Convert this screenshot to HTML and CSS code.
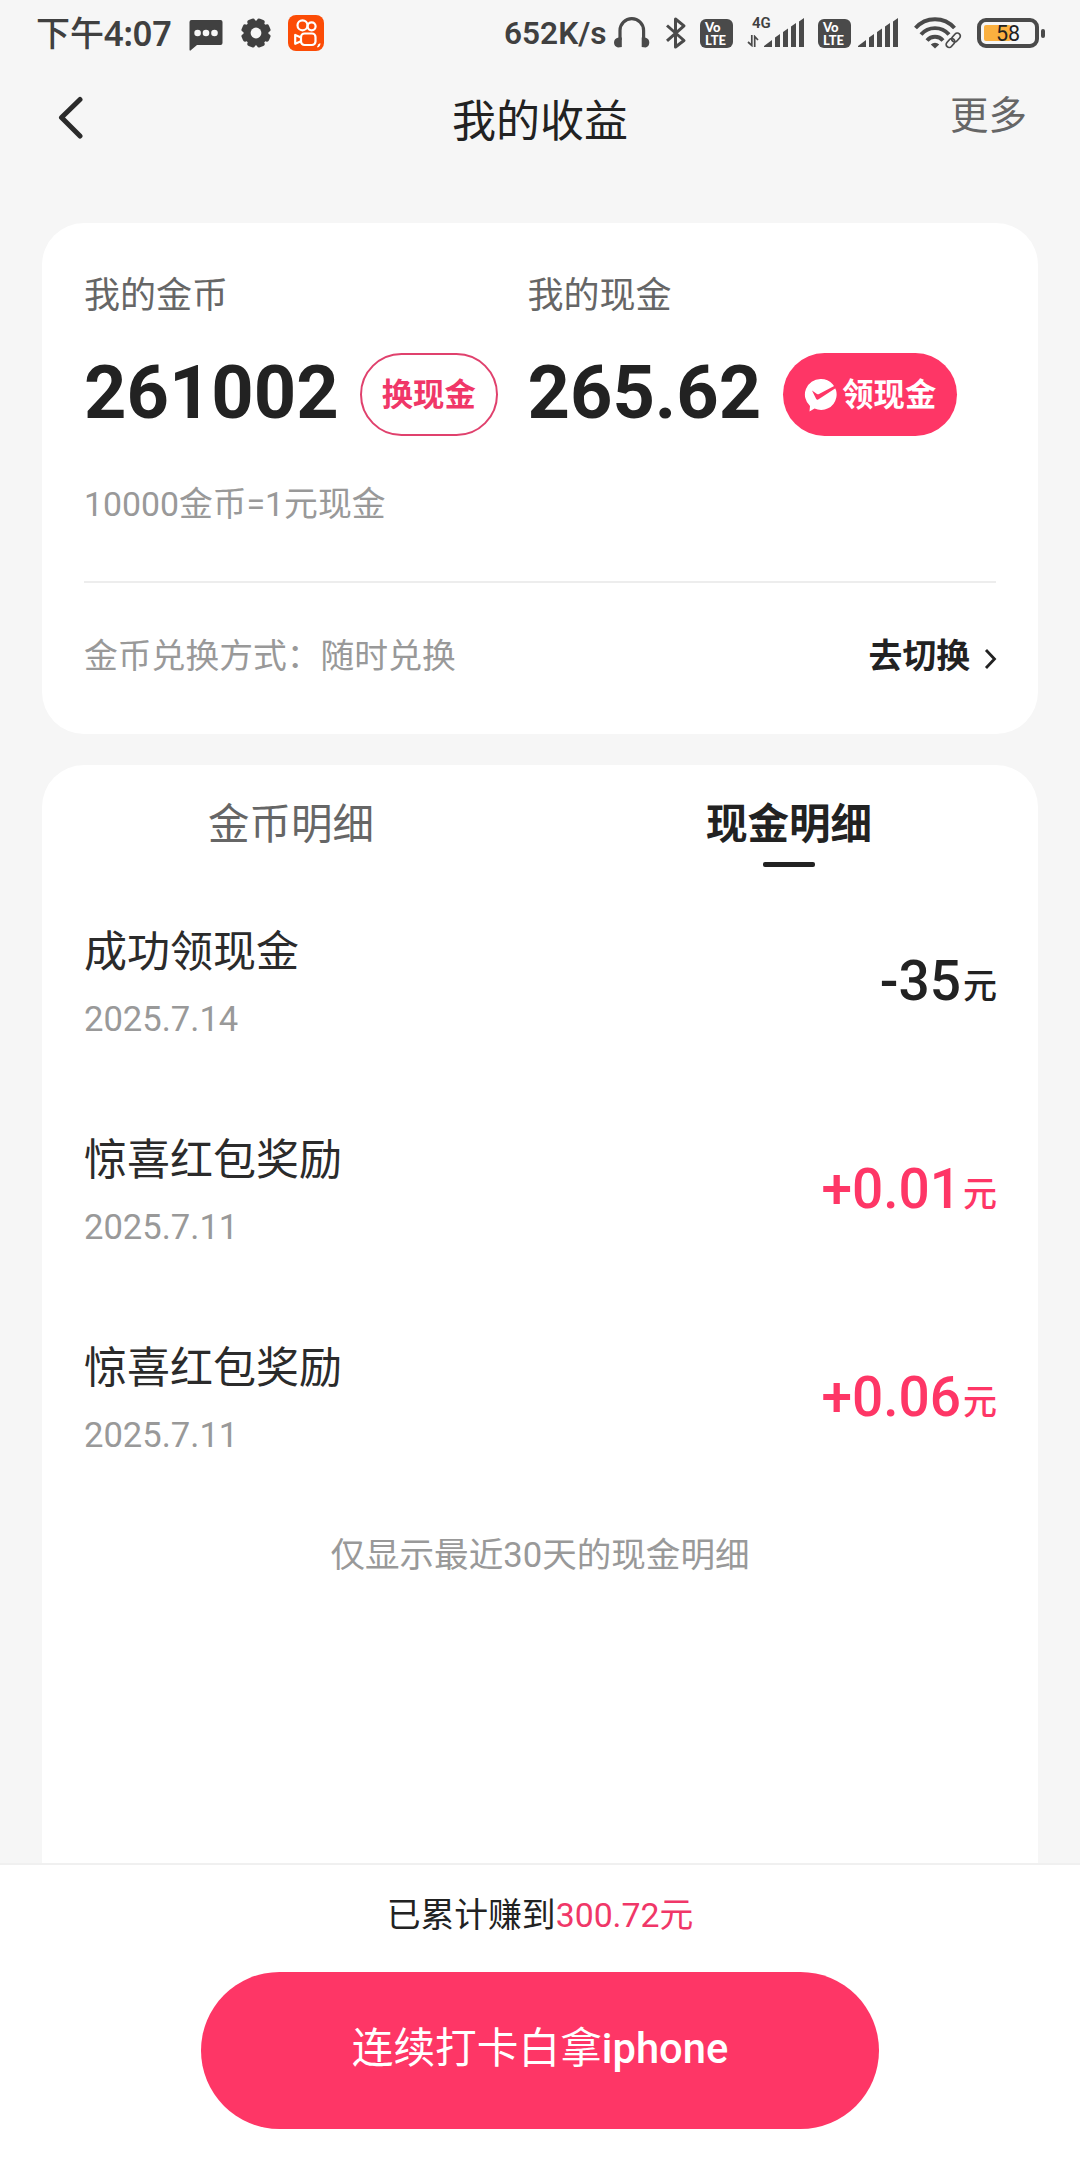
FILE: index.html
```html
<!DOCTYPE html>
<html lang="zh-CN">
<head>
<meta charset="utf-8">
<title>我的收益</title>
<link rel="stylesheet" href="styles.css">
</head>
<body>
<div class="page">
  <div class="status">
    <span class="clock"><span class="period">下午</span>4:07</span>
    <svg class="ico-msg" width="34" height="32" viewBox="0 0 34 32"><path d="M2.500 0H31.500a2 2 0 0 1 2 2V23a2 2 0 0 1-2 2H8L1.500 30.500Q.5 31 .5 29.500V2a2 2 0 0 1 2-2z" fill="#404040"/><circle cx="8.600" cy="13" r="3.300" fill="#f6f6f6"/><circle cx="17" cy="13" r="3.300" fill="#f6f6f6"/><circle cx="25.500" cy="13" r="3.300" fill="#f6f6f6"/></svg>
    <svg class="ico-gear" width="30" height="30" viewBox="-15 -15 30 30" fill="#404040"><g><rect x="-4" y="-14.800" width="8" height="29.600" rx="2.200" transform="rotate(22.500)"/><rect x="-4" y="-14.800" width="8" height="29.600" rx="2.200" transform="rotate(67.500)"/><rect x="-4" y="-14.800" width="8" height="29.600" rx="2.200" transform="rotate(112.500)"/><rect x="-4" y="-14.800" width="8" height="29.600" rx="2.200" transform="rotate(157.500)"/></g><circle r="12.500"/><circle r="5.400" fill="#f6f6f6"/></svg>
    <svg class="ico-app" width="36" height="36" viewBox="0 0 36 36"><rect width="36" height="36" rx="8" fill="#fc4c06"/><g fill="none" stroke="#fff" stroke-width="2.200"><circle cx="14.500" cy="10.300" r="5"/><circle cx="23.600" cy="11.300" r="4"/><rect x="13" y="18.500" width="14.500" height="11.500" rx="3.500"/><path d="M13 22.500l-5.800-2.500v8.800l5.800-2.500" stroke-linejoin="round"/></g><path d="M32.300 28c.5 2-.6 4-3 4.600l-.2-1.200c.8-.4.9-.9.7-1.600z" fill="#fff"/></svg>
    <span class="speed">652K/s</span>
    <svg class="ico-head" width="36" height="32" viewBox="0 0 36 32"><path d="M6 23V13.500a11.800 11.800 0 0 1 23.600 0V23" fill="none" stroke="#4a4a4a" stroke-width="3.200"/><path d="M4.500 20.500h3.300v9.500L4 30.500Q0 29.500 0 25.500T4.500 20.500zM31 20.500h-3.300v9.500l4 .5q3.600-1 3.600-5T31 20.500z" fill="#4a4a4a"/></svg>
    <svg class="ico-bt" width="22" height="34" viewBox="0 0 22 34"><path d="M2 9.500L19 24.500 10.500 31V3L19 9.800 2 24.800" fill="none" stroke="#4a4a4a" stroke-width="3" stroke-linejoin="round"/></svg>
    <span class="volte v1">Vo<br>LTE</span>
    <span class="sig4g">
      <span class="g4">4G</span>
      <svg width="12" height="12" viewBox="0 0 12 12"><path d="M4.800 0v10.500L1 7M7.700 12V1.500L11 5" fill="none" stroke="#4a4a4a" stroke-width="1.700"/></svg>
    </span>
    <svg class="ico-sig s1" width="40" height="30" viewBox="0 0 40 30" fill="#4a4a4a"><path d="M0 28L8 22v7H0zM11 19.500l5-3.500v13h-5zM19 14l5-3.500V29h-5zM27 8.500L32 5v24h-5zM35 3.500L40 0v29h-5z"/></svg>
    <span class="volte v2">Vo<br>LTE</span>
    <svg class="ico-sig s2" width="40" height="30" viewBox="0 0 40 30" fill="#4a4a4a"><path d="M0 28L8 22v7H0zM11 19.500l5-3.500v13h-5zM19 14l5-3.500V29h-5zM27 8.500L32 5v24h-5zM35 3.500L40 0v29h-5z"/></svg>
    <svg class="ico-wifi" width="48" height="32" viewBox="0 0 48 32"><g fill="none" stroke="#4a4a4a" stroke-width="3.900"><path d="M1.500 11a26 26 0 0 1 39 0"/><path d="M7 17.500a18.500 18.500 0 0 1 28 0"/><path d="M13 23.500a10.500 10.500 0 0 1 16 0"/></g><path d="M16.800 27.500a6 6 0 0 1 8.400 0L21 31.500z" fill="#4a4a4a"/><g fill="none" stroke="#f6f6f6" stroke-width="5"><rect x="-5.500" y="-3" width="11" height="6" rx="3" transform="translate(41.500 20) rotate(-45)"/></g><g fill="none" stroke="#4a4a4a" stroke-width="1.700"><rect x="-5" y="-3" width="10" height="6" rx="3" transform="translate(42 20.500) rotate(-48)"/><rect x="-5" y="-3" width="10" height="6" rx="3" transform="translate(36.500 26) rotate(-48)"/></g></svg>
    <span class="battery"><span class="cell"><span class="fill"></span><span class="pct">58</span></span><span class="nub"></span></span>
  </div>

  <div class="nav">
    <svg class="back" width="26" height="44" viewBox="0 0 26 44"><path d="M23 3.500L4.500 21.500 23 40" fill="none" stroke="#2b2b2b" stroke-width="5" stroke-linecap="round" stroke-linejoin="round"/></svg>
    <h1 class="title">我的收益</h1>
    <span class="more">更多</span>
  </div>

  <section class="card wallet">
    <div class="balances">
      <div class="balance coins">
        <div class="label">我的金币</div>
        <div class="value-row"><span class="value">261002</span><span class="pill outline">换现金</span></div>
      </div>
      <div class="balance cash">
        <div class="label">我的现金</div>
        <div class="value-row"><span class="value">265.62</span><span class="pill solid"><svg width="34" height="34" viewBox="0 0 34 34"><path d="M16.500 1a15.500 15.500 0 1 1-6 29.500L5.500 33.500 6 28A15.500 15.500 0 0 1 16.500 1z" fill="#fff"/><path d="M8 12.500l5 3.500q1 .6 2 .1L33 6.500v2.800L14.200 21.500q-1.200.8-2-.4z" fill="#fe3666"/></svg><span>领现金</span></span></div>
      </div>
    </div>
    <div class="rate">10000金币=1元现金</div>
    <div class="mode">
      <span class="mode-text">金币兑换方式：随时兑换</span>
      <span class="switch">去切换<svg width="14" height="22" viewBox="0 0 14 22"><path d="M3 2l8.500 9-8.500 9" fill="none" stroke="#222" stroke-width="2.800"/></svg></span>
    </div>
  </section>

  <section class="card details">
    <div class="tabs">
      <div class="tab">金币明细</div>
      <div class="tab active">现金明细</div>
    </div>
    <div class="record">
      <div><div class="name">成功领现金</div><div class="date">2025.7.14</div></div>
      <div class="amount">-35<small>元</small></div>
    </div>
    <div class="record">
      <div><div class="name">惊喜红包奖励</div><div class="date">2025.7.11</div></div>
      <div class="amount gain">+0.01<small>元</small></div>
    </div>
    <div class="record">
      <div><div class="name">惊喜红包奖励</div><div class="date">2025.7.11</div></div>
      <div class="amount gain">+0.06<small>元</small></div>
    </div>
    <div class="note">仅显示最近30天的现金明细</div>
  </section>

  <footer class="footer">
    <div class="total">已累计赚到<span>300.72元</span></div>
    <div class="cta">连续打卡白拿<b>iphone</b></div>
  </footer>
</div>
</body>
</html>
```
FILE: styles.css
```css
* { box-sizing: border-box; }
body {
  margin: 0;
  background: #f6f6f6;
  font-family: Roboto, "Noto Sans CJK SC", sans-serif;
  color: #222;
}
.page {
  width: 1080px;
  height: 2160px;
  display: flex;
  flex-direction: column;
  overflow: hidden;
}
svg { display: block; flex: none; }

/* status bar */
.status {
  height: 66px;
  display: flex;
  align-items: flex-start;
  color: #404040;
  white-space: nowrap;
  flex: none;
}
.status > * { flex: none; }
.clock {
  width: 136px;
  margin: 11px 0 0 36px;
  font: 600 34px/44px "Noto Sans", "Noto Sans CJK SC", sans-serif;
}
.period { font-weight: 500; }
.ico-msg { margin: 20px 0 0 17px; }
.ico-gear { margin: 18px 0 0 18px; }
.ico-app { margin: 15px 0 0 17px; }
.speed {
  width: 104px;
  margin: 14px 0 0 180px;
  font-size: 31.600px;
  line-height: 40px;
  font-weight: 600;
}
.ico-head { margin: 17px 0 0 6px; }
.ico-bt { margin: 16px 0 0 15px; }
.volte {
  width: 33px;
  height: 29px;
  margin-top: 19px;
  border-radius: 6px;
  background: #4a4a4a;
  color: #fff;
  font: 900 13px/12.500px Lato, sans-serif;
  padding: 2px 0 0 5px;
}
.v1 { margin-left: 13px; }
.sig4g {
  width: 25px;
  height: 30px;
  margin: 15px 0 0 14px;
  display: flex;
  flex-direction: column;
}
.g4 {
  font-size: 15px;
  line-height: 16px;
  font-weight: 600;
  padding-left: 5px;
}
.sig4g svg { margin-top: 4px; }
.ico-sig { margin-top: 18px; }
.s1 { margin-left: -8px; }
.v2 { margin-left: 14px; }
.s2 { margin-left: 7px; }
.ico-wifi { margin: 17px 0 0 16px; }
.battery { margin: 18px 0 0 15px; display: flex; align-items: center; }
.cell {
  width: 62px;
  height: 30px;
  border: 4px solid #4a4a4a;
  border-radius: 9px;
  padding: 3px;
  display: grid;
}
.fill, .pct { grid-area: 1 / 1; }
.fill { width: 27px; height: 16px; background: #fbb03f; border-radius: 2px; }
.pct {
  text-align: center;
  font-size: 21.500px;
  line-height: 18px;
  color: #222;
}
.nub { width: 4px; height: 9px; margin-left: 2px; border-radius: 2px; background: #4a4a4a; }

/* title bar */
.nav {
  height: 157px;
  flex: none;
  display: grid;
  grid-template-columns: 1fr auto 1fr;
  align-items: start;
}
.back { margin: 30px 0 0 57px; }
.title {
  margin: 24px 0 0;
  font-size: 44px;
  line-height: 64px;
  font-weight: 400;
}
.more {
  justify-self: end;
  margin: 22px 53px 0 0;
  font-size: 38.500px;
  line-height: 56px;
  color: #666;
}

/* cards */
.card {
  margin: 0 42px;
  background: #fff;
  flex: none;
}
.wallet {
  height: 511px;
  border-radius: 42px;
  padding: 48px 42px 0;
}
.balances { display: flex; }
.coins { width: 443.500px; }
.label {
  font-size: 36px;
  line-height: 50px;
  color: #666;
}
.value-row {
  display: flex;
  height: 83px;
  margin-top: 32px;
  align-items: center;
}
.value {
  font-size: 74px;
  line-height: 83px;
  font-weight: 700;
  padding-bottom: 4px;
}
.pill {
  height: 83px;
  border-radius: 42px;
  display: flex;
  align-items: center;
  justify-content: center;
  font-size: 31.300px;
  font-weight: 700;
  line-height: 44px;
}
.outline { width: 138px; margin-left: 21px; border: 2px solid #e0416d; color: #f03768; padding-top: 2px; }
.solid { width: 174px; margin-left: 22px; background: #fe3666; color: #fff; }
.solid svg { margin-right: 4px; }
.solid span { padding-top: 2px; }
.rate {
  margin-top: 44px;
  height: 103px;
  font-size: 33.800px;
  line-height: 50px;
  color: #999;
  border-bottom: 2px solid #ededed;
}
.mode {
  margin-top: 49px;
  display: flex;
  justify-content: space-between;
  font-size: 33.800px;
  line-height: 50px;
}
.mode-text { color: #999; }
.switch { display: flex; align-items: center; font-weight: 700; }
.switch svg { margin: 3px -1px 0 13px; }

.details {
  margin-top: 31px;
  flex: 1;
  border-radius: 42px 42px 0 0;
}
.tabs { display: flex; height: 126px; padding-top: 30px; }
.tab {
  flex: 1;
  display: flex;
  flex-direction: column;
  align-items: center;
  font-size: 41.500px;
  line-height: 60px;
  color: #666;
}
.active { font-weight: 700; color: #222; }
.active::after {
  content: "";
  width: 52px;
  height: 5px;
  margin-top: 7px;
  border-radius: 2px;
  background: #222;
}
.record {
  height: 208.200px;
  padding: 30px 42px 0;
  display: flex;
  justify-content: space-between;
}
.name { font-size: 43px; line-height: 62px; color: #2b2b2b; }
.date { margin-top: 14px; font-size: 34.600px; line-height: 44px; color: #999; }
.amount {
  margin: 27px -1px 0 0;
  font-size: 55px;
  line-height: 66px;
  font-weight: 500;
}
.amount small { margin-left: 2px; font-size: 34px; line-height: 1; vertical-align: 2px; }
.gain { color: #fe3666; }
.note {
  margin-top: 14px;
  text-align: center;
  font-size: 34.600px;
  line-height: 50px;
  color: #999;
}

/* bottom bar */
.footer {
  height: 297px;
  flex: none;
  border-top: 2px solid #f0f0f0;
  background: #fff;
  display: flex;
  flex-direction: column;
  align-items: center;
}
.total { margin-top: 26px; font-size: 33.800px; line-height: 50px; }
.total span { color: #f03768; }
.cta {
  width: 678px;
  height: 157px;
  margin-top: 31px;
  border-radius: 79px;
  background: #fe3666;
  color: #fff;
  font-size: 41.700px;
  line-height: 154px;
  text-align: center;
}
.cta b { font-weight: 500; }
```
